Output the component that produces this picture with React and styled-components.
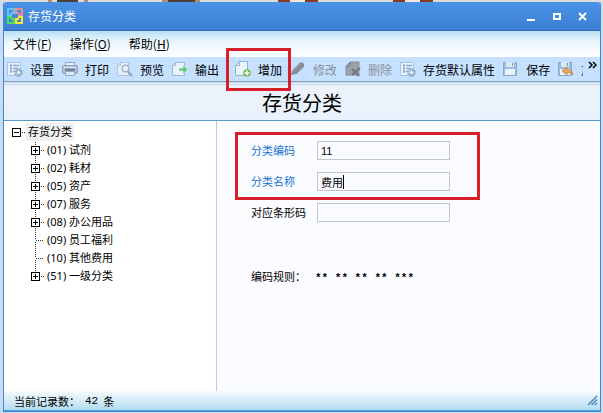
import React, { useState } from "react";
import styled, { createGlobalStyle, css } from "styled-components";

const GlobalStyle = createGlobalStyle`
  * {
    box-sizing: border-box;
  }
  body {
    margin: 0;
    background: #cfe0f3;
    color: #000;
    font-family: "Noto Sans CJK SC", sans-serif;
    font-size: 12px;
  }
  button, input {
    font: inherit;
    color: inherit;
  }
`;
const Desktop = styled.div`
  display: flex;
  min-height: 100vh;
  padding: 2px 2px 1px 3px;
  background: linear-gradient(
      90deg,
      #dcdcdc 48px,
      #b98a6a 48px 52px,
      #dcdcdc 52px 57px,
      #4c4038 57px 78px,
      #dcdcdc 78px 84px,
      #b98a6a 84px 88px,
      #dcdcdc 88px 162px,
      #b98a6a 162px 168px,
      #4c4038 168px 195px,
      #b98a6a 195px 200px,
      #dcdcdc 200px 278px,
      #8a3a22 278px 290px,
      #f5e6dc 290px 305px,
      #8a3a22 305px 318px,
      #dcdcdc 318px 393px,
      #8a3a22 393px 405px,
      #f5e6dc 405px 420px,
      #8a3a22 420px 433px,
      #dcdcdc 433px
    )
    0 0 / 100% 2px no-repeat #c9dcf2;
`;
const Window = styled.main`
  flex: 1;
  min-width: 0;
  display: flex;
  flex-direction: column;
  border: 1px solid #3f86d2;
  border-top: 0;
  border-radius: 3px 3px 0 0;
  overflow: hidden;
  background: #fff;
`;
const TitleBar = styled.header`
  height: 29px;
  flex: none;
  display: flex;
  align-items: center;
  padding: 0 5px 0 3px;
  color: #fff;
  background: linear-gradient(#4a93e6, #3c7fd3);
  border-bottom: 1px solid #2c6cb8;
`;
const Title = styled.span`
  flex: 1;
  margin-left: 5px;
  line-height: 28px;
`;
const WindowButton = styled.button`
  width: 26px;
  height: 24px;
  padding: 0;
  border: 0;
  background: none;
  display: grid;
  place-items: center;
`;
const MenuBar = styled.nav`
  height: 26px;
  flex: none;
  display: flex;
  align-items: center;
  gap: 18px;
  padding: 0 9px;
  background: linear-gradient(#b9e0f5, #e9f6fc 40%, #fff);
`;
const MenuButton = styled.button`
  border: 0;
  padding: 0;
  background: none;
  line-height: 18px;
`;
const ToolBar = styled.div`
  height: 25px;
  flex: none;
  display: flex;
  background: #c6e1ff;
  border-bottom: 1px solid #8d9eb3;
`;
const Tools = styled.div`
  flex: 1;
  min-width: 0;
  display: flex;
  overflow-x: clip;
`;
const marked = css`
  &::after {
    content: "";
    position: absolute;
    border: 3px solid #d8202a;
    pointer-events: none;
  }
`;
const ToolButton = styled.button`
  position: relative;
  flex: none;
  display: flex;
  align-items: center;
  gap: 7px;
  height: 24px;
  padding: 0 4px 0 4px;
  border: 0;
  background: none;
  white-space: nowrap;
  margin-left: ${({ $spaced }) => ($spaced ? "8px" : "0")};
  &:first-child {
    padding-left: 3px;
  }
  &:disabled {
    color: #8b929a;
  }
  svg {
    flex: none;
  }
  ${({ $marked }) =>
    $marked &&
    css`
      ${marked}
      z-index: 1;
      &::after {
        inset: -9px -5px -10px -5px;
      }
    `}
`;
const MoreButton = styled.button`
  width: 17px;
  padding: 3px 0 0 5px;
  border: 0;
  background: none;
  display: flex;
`;
const Heading = styled.h1`
  flex: none;
  margin: 0;
  height: 39px;
  border-top: 3px double #c3dcf2;
  border-bottom: 1px solid #5a9bc8;
  background: linear-gradient(#edf2fb, #e8f2fc);
  font-size: 20px;
  font-weight: 400;
  line-height: 36px;
  text-align: center;
`;
const Content = styled.div`
  flex: 1;
  display: flex;
  font-size: 11px;
`;
const TreePane = styled.aside`
  width: 213px;
  flex: none;
  padding: 2px 0 0 8px;
  border-right: 1px solid #c6cbd6;
  background: #fff;
  font-family: "Noto Sans", "Noto Sans CJK SC", sans-serif;
`;
const TreeRow = styled.div`
  display: flex;
  align-items: center;
  height: 18px;
  line-height: 18px;
`;
const Toggle = styled.button`
  width: 9px;
  height: 9px;
  padding: 0;
  border: 1px solid #000;
  display: block;
  background: ${({ $open }) =>
    $open
      ? "linear-gradient(#000, #000) center / 5px 1px no-repeat #fff"
      : "linear-gradient(#000, #000) center / 5px 1px no-repeat, linear-gradient(#000, #000) center / 1px 5px no-repeat #fff"};
`;
const Dots = styled.span`
  width: ${({ $long }) => ($long ? "9px" : "4px")};
  margin-left: ${({ $long }) => ($long ? "4px" : "0")};
  height: 1px;
  background: repeating-linear-gradient(90deg, #fff 0 1px, #333 1px 2px);
`;
const RootLabel = styled.span`
  margin-left: 1px;
  padding: 0 2px;
  background: #f0f0f0;
`;
const Branches = styled.ul`
  list-style: none;
  margin: 0 0 0 19px;
  padding: 0;
  background: repeating-linear-gradient(#fff 0 1px, #333 1px 2px) 4px 0 / 1px
    136px no-repeat;
`;
const NodeLabel = styled.span`
  margin-left: 3px;
`;
const FormPane = styled.form`
  flex: 1;
  padding: 11px 18px 0;
  background: #fbfcff;
`;
const FieldGroup = styled.div`
  position: relative;
  display: grid;
  gap: 12px;
  padding: 3px 16px;
  max-width: 245px;
  ${({ $marked }) =>
    $marked &&
    css`
      padding: 9px 16px;
      ${marked}
      &::after {
        inset: 0;
      }
    `}
`;
const Field = styled.div`
  display: flex;
  align-items: center;
  height: 19px;
  label {
    width: 66px;
    flex: none;
    line-height: 19px;
    color: ${({ $required }) => ($required ? "#1873cf" : "#000")};
  }
`;
const InputBox = styled.div`
  position: relative;
  width: 133px;
  input {
    display: block;
    width: 100%;
    height: 19px;
    padding: 0 3px;
    border: 1px solid #c1c5ce;
    border-radius: 0;
    background: #fbfcff;
    outline: 0;
    font-family: "Liberation Sans", "Noto Sans CJK SC", sans-serif;
  }
`;
const Caret = styled.span`
  position: absolute;
  left: 26px;
  top: 3px;
  width: 1px;
  height: 14px;
  background: #000;
`;
const Rule = styled.div`
  display: flex;
  align-items: center;
  padding: 42px 16px 0;
  line-height: 18px;
  span {
    width: 64px;
  }
`;
const Mask = styled.b`
  font-family: "Liberation Mono", monospace;
  line-height: 12px;
  padding-top: 4px;
`;
const StatusBar = styled.footer`
  flex: none;
  height: 20px;
  display: flex;
  align-items: center;
  justify-content: space-between;
  padding: 0 2px 0 10px;
  border-bottom: 1px solid #4f9fe3;
  background: linear-gradient(#f7fbfe, #b3dcf2);
  font-size: 11px;
`;
const StatusText = styled.span`
  display: flex;
  gap: 5px;
  line-height: 18px;
  white-space: nowrap;
  b {
    font-weight: 400;
    font-family: "Liberation Mono", monospace;
  }
`;

const Logo = () => (
  <svg width="16" height="16" viewBox="0 0 16 16" fill="none" strokeWidth="2">
    <path d="M5 7H1V1h6v4H4" stroke="#62c8f2" />
    <path d="M11 7h4V1H9v4h3" stroke="#f08b91" />
    <path d="M5 9H1v6h6v-4H4" stroke="#4ee05c" />
    <path d="M11 9h4v6H9v-4h3" stroke="#f5e52c" />
  </svg>
);
const SettingIcon = () => (
  <svg width="16" height="16" viewBox="0 0 16 16" fill="none">
    <path d="M.5 1.500h13v13H.5z" fill="#e6f1fd" stroke="#a9c3de" />
    <path
      d="M3 4.500h2M6 4.500h6M3 7.500h2M6 7.500h5M3 10.500h2M6 10.500h2"
      stroke="#8fa9c8"
      strokeWidth="1.500"
    />
    <path d="M4 3v9" stroke="#8fa9c8" />
    <circle cx="11.5" cy="11.5" r="3.6" stroke="#86a5c8" strokeWidth="1.6" strokeDasharray="1.7 1.1" />
    <circle cx="11.5" cy="11.5" r="2.3" fill="#e6f0fb" stroke="#86a5c8" />
  </svg>
);
const PrintIcon = () => (
  <svg width="16" height="16" viewBox="0 0 16 16">
    <path d="M3.5 5V1.5h9V5" fill="#e8f1fa" stroke="#8ca7c5" />
    <rect x=".5" y="4.5" width="15" height="8" rx="1.5" fill="#b2c0d1" stroke="#8fa3bb" />
    <path d="M2 6.5h12" stroke="#dfe8f2" />
    <path d="M3 7.500h10v2.500H3z" fill="#71859d" />
    <path d="M3.5 10.5h9v4h-9z" fill="#d9eafb" stroke="#8fa8c4" />
  </svg>
);
const PreviewIcon = () => (
  <svg width="16" height="16" viewBox="0 0 16 16" fill="none">
    <path d="M.5 4.500l3-3h8v13H.5z" fill="#e3effb" stroke="#b0c4da" />
    <path d="M.5 4.500h3v-3" stroke="#b0c4da" />
    <circle cx="8.5" cy="7.5" r="3.4" fill="#e3effa" stroke="#9bb0c6" strokeWidth="1.2" />
    <path d="M11 10.5l4 4.5" stroke="#93a5b8" strokeWidth="2" />
  </svg>
);
const ExportIcon = () => (
  <svg width="16" height="16" viewBox="0 0 16 16" fill="none">
    <path d="M.5 4.500l3-3h9v13H.5z" fill="#e8f3fc" stroke="#9fbad6" />
    <path d="M.5 4.500h3v-3" stroke="#9fbad6" />
    <path d="M7 7h4V4l5 4.5-5 4.5v-3H7z" fill="#65c97e" stroke="#e8f7ef" strokeWidth=".6" />
  </svg>
);
const AddIcon = () => (
  <svg width="16" height="16" viewBox="0 0 16 16" fill="none">
    <path d="M.5 4.5l4-4h8v14H.5z" fill="#e9f3fd" stroke="#94b2d3" />
    <path d="M.5 4.5h4v-4" stroke="#94b2d3" />
    <circle cx="12" cy="12" r="3.8" fill="#76b94f" />
    <path d="M12 9.5v5M9.5 12h5" stroke="#fff" strokeWidth="1.4" />
  </svg>
);
const EditIcon = () => (
  <svg width="16" height="16" viewBox="0 0 16 16">
    <path d="M1 14l1.5-5L9 2.5Q11 .5 13 2t.5 4.2L6.500 13z" fill="#858c94" />
    <path d="M3 9.5L10 3" stroke="#a7afb8" />
  </svg>
);
const DeleteIcon = () => (
  <svg width="16" height="16" viewBox="0 0 16 16">
    <path d="M1 5l4-4h9v13H1z" fill="#9aa1a8" stroke="#858d95" />
    <path d="M1 5h4V1" fill="none" stroke="#767e86" />
    <path d="M7 8l7 7M15 7l-8 7" stroke="#6f767d" strokeWidth="2" />
  </svg>
);
const SaveIcon = ({ undo }) => (
  <svg width="16" height="16" viewBox="0 0 16 16">
    <path d="M.5 1.500h13v13H.5z" fill="#9dbddd" stroke="#86a9cb" />
    <path d="M3 1h8v5H3z" fill="#dbe9f5" />
    <path d="M9.500 2v3" stroke="#7196bb" />
    <path d="M2 8h10v6H2z" fill="#e9f3fc" />
    {undo && (
      <path
        d="M9 6v2.5q5 0 6 5-2-2-6-2V14l-5-4z"
        fill="#eca85e"
        stroke="#c47d38"
        strokeWidth=".7"
      />
    )}
  </svg>
);

const menus = [
  ["文件", "F"],
  ["操作", "O"],
  ["帮助", "H"],
];
const tools = [
  { text: "设置", icon: <SettingIcon /> },
  { text: "打印", icon: <PrintIcon /> },
  { text: "预览", icon: <PreviewIcon /> },
  { text: "输出", icon: <ExportIcon /> },
  { text: "增加", icon: <AddIcon />, spaced: true, marked: true },
  { text: "修改", icon: <EditIcon />, disabled: true },
  { text: "删除", icon: <DeleteIcon />, disabled: true },
  { text: "存货默认属性", icon: <SettingIcon /> },
  { text: "保存", icon: <SaveIcon /> },
  { text: "放", icon: <SaveIcon undo /> },
];
const nodes = [
  { text: "(01) 试剂", children: true },
  { text: "(02) 耗材", children: true },
  { text: "(05) 资产", children: true },
  { text: "(07) 服务", children: true },
  { text: "(08) 办公用品", children: true },
  { text: "(09) 员工福利" },
  { text: "(10) 其他费用" },
  { text: "(51) 一级分类", children: true },
];

function App() {
  const [code, setCode] = useState("11");
  const [name, setName] = useState("费用");
  const [barcode, setBarcode] = useState("");

  return (
    <>
      <GlobalStyle />
      <Desktop>
        <Window>
          <TitleBar>
            <Logo />
            <Title>存货分类</Title>
            <WindowButton aria-label="最小化">
              <svg width="9" height="9">
                <path d="M1 8h8" stroke="#fff" strokeWidth="2" />
              </svg>
            </WindowButton>
            <WindowButton aria-label="最大化">
              <svg width="9" height="9">
                <path d="M2 2h6v5H2z" fill="none" stroke="#fff" strokeWidth="2" />
              </svg>
            </WindowButton>
            <WindowButton aria-label="关闭">
              <svg width="9" height="9">
                <path d="M1 1l7 7M8 1L1 8" stroke="#fff" strokeWidth="2" />
              </svg>
            </WindowButton>
          </TitleBar>
          <MenuBar>
            {menus.map(([text, key]) => (
              <MenuButton key={key}>
                {text}(<u>{key}</u>)
              </MenuButton>
            ))}
          </MenuBar>
          <ToolBar>
            <Tools>
              {tools.map((tool) => (
                <ToolButton
                  key={tool.text}
                  disabled={tool.disabled}
                  $spaced={tool.spaced}
                  $marked={tool.marked}
                >
                  {tool.icon}
                  {tool.text}
                </ToolButton>
              ))}
            </Tools>
            <MoreButton aria-label="更多">
              <svg width="9" height="9" fill="none" stroke="#000" strokeWidth="1.5">
                <path d="M1 2l3 3-3 3M5 2l3 3-3 3" />
              </svg>
            </MoreButton>
          </ToolBar>
          <Heading>存货分类</Heading>
          <Content>
            <TreePane>
              <TreeRow>
                <Toggle $open aria-label="折叠" />
                <Dots />
                <RootLabel>存货分类</RootLabel>
              </TreeRow>
              <Branches>
                {nodes.map((node) => (
                  <TreeRow as="li" key={node.text}>
                    {node.children && <Toggle aria-label="展开" />}
                    <Dots $long={!node.children} />
                    <NodeLabel>{node.text}</NodeLabel>
                  </TreeRow>
                ))}
              </Branches>
            </TreePane>
            <FormPane>
              <FieldGroup $marked>
                <Field $required>
                  <label htmlFor="code">分类编码</label>
                  <InputBox>
                    <input
                      id="code"
                      value={code}
                      onChange={(e) => setCode(e.target.value)}
                    />
                  </InputBox>
                </Field>
                <Field $required>
                  <label htmlFor="name">分类名称</label>
                  <InputBox>
                    <input
                      id="name"
                      value={name}
                      onChange={(e) => setName(e.target.value)}
                    />
                    <Caret />
                  </InputBox>
                </Field>
              </FieldGroup>
              <FieldGroup>
                <Field>
                  <label htmlFor="barcode">对应条形码</label>
                  <InputBox>
                    <input
                      id="barcode"
                      value={barcode}
                      onChange={(e) => setBarcode(e.target.value)}
                    />
                  </InputBox>
                </Field>
              </FieldGroup>
              <Rule>
                <span>编码规则：</span>
                <Mask>** ** ** ** ***</Mask>
              </Rule>
            </FormPane>
          </Content>
          <StatusBar>
            <StatusText>
              <span>当前记录数：</span>
              <b>42</b>条
            </StatusText>
            <svg width="11" height="11" stroke="#4f86bd" strokeWidth="1.5">
              <path d="M1 10L10 1M4.500 10L10 4.500M8 10l2-2" />
            </svg>
          </StatusBar>
        </Window>
      </Desktop>
    </>
  );
}

export default App;
